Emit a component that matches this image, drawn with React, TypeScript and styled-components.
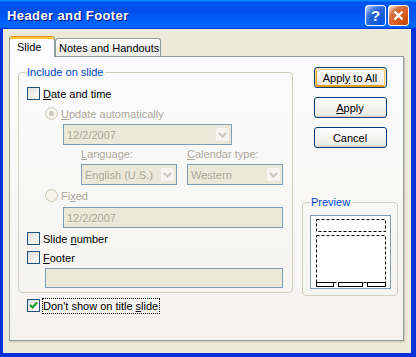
import React from 'react'
import styled, { createGlobalStyle } from 'styled-components'

const GlobalStyle = createGlobalStyle`
    html, body {
        margin: 0;
        padding: 0;
        background: #ffffff;
    }
    body {
        font-family: 'Liberation Sans', Arial, sans-serif;
        font-size: 11px;
        color: #000;
    }
`

const Window = styled.div`
    width: 416px;
    height: 357px;
    display: flex;
    flex-direction: column;
    background: #0831d9;
    box-sizing: border-box;
`

const TitleBar = styled.div`
    height: 29px;
    flex: none;
    display: flex;
    align-items: center;
    padding: 2px 7px 0 7px;
    box-sizing: border-box;
    background: linear-gradient(
        180deg,
        #0997ff,
        #0053ee 8%,
        #0050ee 40%,
        #06f 88%,
        #06f 93%,
        #005bff 95%,
        #003dd7 96%,
        #003dd7
    );
`

const Title = styled.div`
    flex: 1;
    color: #fff;
    font-family: 'Liberation Sans', Arial, sans-serif;
    font-weight: 700;
    font-size: 13px;
    letter-spacing: 0.4px;
    text-shadow: 1px 1px #0f1089;
`

const TitleButtons = styled.div`
    display: flex;
    gap: 2px;
`

const CaptionButton = styled.div<{ $kind: 'help' | 'close' }>`
    width: 21px;
    height: 21px;
    box-sizing: border-box;
    border: 1px solid #fff;
    border-radius: 3px;
    display: flex;
    align-items: center;
    justify-content: center;
    color: #fff;
    font-weight: 700;
    font-size: 15px;
    background: ${({ $kind }) =>
        $kind === 'help'
            ? 'radial-gradient(circle at 90% 90%, #0054e9 0%, #2263d5 55%, #4479e4 70%, #a3bbec 90%, #fff 100%)'
            : 'radial-gradient(circle at 90% 90%, #cc4600 0%, #dc6527 55%, #cd7546 70%, #ffccb2 90%, #fff 100%)'};
`

const Body = styled.div`
    flex: 1;
    margin: 0 5px 4px 3px;
    background: #ece9d8;
    padding: 7px 0 0 6px;
    box-sizing: border-box;
`

const TabRow = styled.div`
    display: flex;
    align-items: flex-end;
    height: 20px;
    position: relative;
    z-index: 1;
`

const Tab = styled.div<{ $active?: boolean }>`
    box-sizing: border-box;
    height: ${({ $active }) => ($active ? '21px' : '18px')};
    margin-bottom: ${({ $active }) => ($active ? '-1px' : '0')};
    padding: ${({ $active }) => ($active ? '3px 0 0 7px' : '2px 0 0 3px')};
    border: 1px solid #919b9c;
    border-bottom: none;
    border-radius: 3px 3px 0 0;
    background: ${({ $active }) =>
        $active ? '#fcfcfe' : 'linear-gradient(180deg, #fff, #fafaf9 30%, #ecebe6)'};
    border-top-color: ${({ $active }) => ($active ? '#e68b2c' : '#919b9c')};
    box-shadow: ${({ $active }) => ($active ? 'inset 0 2px #ffc73c' : 'none')};
    width: ${({ $active }) => ($active ? '46px' : '106px')};
    line-height: 14px;
    white-space: nowrap;
`

const Panel = styled.div`
    width: 395px;
    height: 285px;
    box-sizing: border-box;
    border: 1px solid #919b9c;
    box-shadow: 1px 1px 0 #d0cebf, 2px 2px 0 #e3e0d0;
    background: linear-gradient(180deg, #fcfcfe, #f4f3ee);
    padding: 9px 0 0 8px;
    display: flex;
    gap: 9px;
`

const LeftColumn = styled.div`
    width: 275px;
    display: flex;
    flex-direction: column;
`

const RightColumn = styled.div`
    width: 96px;
    display: flex;
    flex-direction: column;
    align-items: center;
`

const Group = styled.fieldset`
    margin: 0;
    min-width: 0;
    box-sizing: border-box;
    border: 1px solid #d0d0bf;
    border-radius: 4px;
    padding: 0 8px 4px 8px;
    display: flex;
    flex-direction: column;
    align-items: flex-start;
`

const Legend = styled.legend`
    color: #0046d5;
    padding: 0 2px 0 1px;
    margin-left: -1px;
    line-height: 13px;
    height: 13px;
`

const Row = styled.div<{ $top: number; $indent?: number; $disabled?: boolean }>`
    display: flex;
    align-items: center;
    gap: 3px;
    height: 13px;
    margin-top: ${({ $top }) => $top}px;
    margin-left: ${({ $indent }) => $indent ?? 0}px;
    color: ${({ $disabled }) => ($disabled ? '#aca899' : '#000')};
    white-space: nowrap;
`

const Box = styled.div`
    width: 13px;
    height: 13px;
    box-sizing: border-box;
    border: 1px solid #1c5180;
    background: linear-gradient(135deg, #dcdcd7, #fff);
    display: flex;
    align-items: center;
    justify-content: center;
    flex: none;
`

const Radio = styled.div<{ $selected?: boolean }>`
    width: 13px;
    height: 13px;
    box-sizing: border-box;
    border: 1px solid #cac8bb;
    border-radius: 50%;
    background: #f5f4ea;
    display: flex;
    align-items: center;
    justify-content: center;
    flex: none;
    &::after {
        content: '';
        display: ${({ $selected }) => ($selected ? 'block' : 'none')};
        width: 5px;
        height: 5px;
        border-radius: 50%;
        background: #cac8bb;
    }
`

const Field = styled.div<{ $width: number; $height?: number; $top: number; $indent: number }>`
    width: ${({ $width }) => $width}px;
    height: ${({ $height }) => $height ?? 21}px;
    margin-top: ${({ $top }) => $top}px;
    margin-left: ${({ $indent }) => $indent}px;
    box-sizing: border-box;
    border: 1px solid #7f9db9;
    background: #ebe8d7;
    color: #aca899;
    display: flex;
    align-items: center;
    padding-left: 3px;
    flex: none;
`

const FieldText = styled.span`
    flex: 1;
    white-space: nowrap;
`

const DropButton = styled.div`
    width: 15px;
    height: 15px;
    margin-right: 1px;
    box-sizing: border-box;
    border: 1px solid #e8e6dd;
    border-radius: 2px;
    background: #f5f4ee;
    display: flex;
    align-items: center;
    justify-content: center;
`

const LabelGrid = styled.div`
    display: grid;
    grid-template-columns: 96px 96px;
    column-gap: 10px;
    margin-left: 54px;
`

const SmallLabel = styled.div`
    color: #aca899;
    height: 13px;
    line-height: 13px;
    margin-top: 3px;
    white-space: nowrap;
`

const FocusText = styled.span`
    outline: 1px dotted #000;
    outline-offset: 0;
    padding: 1px 1px 0 0;
    line-height: 13px;
`

const Button = styled.div<{ $default?: boolean; $top: number }>`
    width: 73px;
    height: 21px;
    margin-top: ${({ $top }) => $top}px;
    box-sizing: border-box;
    border: 1px solid #003c74;
    border-radius: 3px;
    background: linear-gradient(180deg, #fff, #ecebe6 86%, #d6d0c5);
    box-shadow: ${({ $default }) =>
        $default
            ? 'inset -1px 1px #fff0cf, inset 1px 2px #fdd889, inset -2px 2px #fbc761, inset 2px -2px #e5a01a'
            : 'none'};
    display: flex;
    align-items: center;
    justify-content: center;
    flex: none;
    white-space: nowrap;
`

const PreviewGroup = styled(Group)`
    width: 96px;
    margin-top: 48px;
    padding-bottom: 6px;
`

const PreviewBox = styled.div`
    width: 81px;
    height: 74px;
    margin-top: 6px;
    margin-left: -1px;
    box-sizing: border-box;
    border: 1px solid #7f9db9;
    background: #fff;
    display: flex;
`

const Chevron = () => (
    <svg width="9" height="6" viewBox="0 0 9 6">
        <path d="M1 1 L4.5 4.5 L8 1" fill="none" stroke="#c9c7ba" strokeWidth="2" />
    </svg>
)

const Combo = ({ text, width, top, indent }: { text: string; width: number; top: number; indent: number }) => (
    <Field $width={width} $top={top} $indent={indent}>
        <FieldText>{text}</FieldText>
        <DropButton>
            <Chevron />
        </DropButton>
    </Field>
)

const Check = () => (
    <svg width="9" height="9" viewBox="0 0 9 9">
        <path d="M1 4 L3.5 6.5 L8 1.5" fill="none" stroke="#21a121" strokeWidth="2.2" />
    </svg>
)

const PreviewDrawing = () => (
    <svg width="79" height="72" viewBox="0 0 79 72">
        <g fill="none" stroke="#000" strokeWidth="1">
            <rect x="5.5" y="3.5" width="69" height="12" strokeDasharray="3 2" />
            <rect x="5.5" y="19.5" width="69" height="47" strokeDasharray="3 2" />
            <rect x="5.5" y="66.5" width="17" height="4" />
            <rect x="27.5" y="66.5" width="24" height="4" />
            <rect x="56.5" y="66.5" width="18" height="4" />
        </g>
    </svg>
)

export default function App() {
    return (
        <>
            <GlobalStyle />
            <Window>
                <TitleBar>
                    <Title>Header and Footer</Title>
                    <TitleButtons>
                        <CaptionButton $kind="help">?</CaptionButton>
                        <CaptionButton $kind="close">
                            <svg width="11" height="11" viewBox="0 0 11 11">
                                <path d="M1.5 1.5 L9.5 9.5 M9.5 1.5 L1.5 9.5" stroke="#fff" strokeWidth="2.4" />
                            </svg>
                        </CaptionButton>
                    </TitleButtons>
                </TitleBar>
                <Body>
                    <TabRow>
                        <Tab $active>Slide</Tab>
                        <Tab>Notes and Handouts</Tab>
                    </TabRow>
                    <Panel>
                        <LeftColumn>
                            <Group>
                                <Legend>Include on slide</Legend>
                                <Row $top={8}>
                                    <Box />
                                    <span>
                                        <u>D</u>ate and time
                                    </span>
                                </Row>
                                <Row $top={7} $indent={18} $disabled>
                                    <Radio $selected />
                                    <span>
                                        <u>U</u>pdate automatically
                                    </span>
                                </Row>
                                <Combo text="12/2/2007" width={169} top={4} indent={36} />
                                <LabelGrid>
                                    <SmallLabel>
                                        <u>L</u>anguage:
                                    </SmallLabel>
                                    <SmallLabel>
                                        <u>C</u>alendar type:
                                    </SmallLabel>
                                </LabelGrid>
                                <LabelGrid>
                                    <Combo text="English (U.S.)" width={96} top={3} indent={0} />
                                    <Combo text="Western" width={96} top={3} indent={0} />
                                </LabelGrid>
                                <Row $top={4} $indent={18} $disabled>
                                    <Radio />
                                    <span>
                                        Fi<u>x</u>ed
                                    </span>
                                </Row>
                                <Field $width={220} $top={5} $indent={36}>
                                    <FieldText>12/2/2007</FieldText>
                                </Field>
                                <Row $top={4}>
                                    <Box />
                                    <span>
                                        Slide <u>n</u>umber
                                    </span>
                                </Row>
                                <Row $top={6}>
                                    <Box />
                                    <span>
                                        <u>F</u>ooter
                                    </span>
                                </Row>
                                <Field $width={238} $height={20} $top={4} $indent={18} />
                            </Group>
                            <Row $top={6} $indent={9}>
                                <Box>
                                    <Check />
                                </Box>
                                <FocusText>
                                    Don't show on title <u>s</u>lide
                                </FocusText>
                            </Row>
                        </LeftColumn>
                        <RightColumn>
                            <Button $default $top={1}>
                                <span>
                                    Appl<u>y</u> to All
                                </span>
                            </Button>
                            <Button $top={9}>
                                <span>
                                    <u>A</u>pply
                                </span>
                            </Button>
                            <Button $top={9}>Cancel</Button>
                            <PreviewGroup>
                                <Legend>Preview</Legend>
                                <PreviewBox>
                                    <PreviewDrawing />
                                </PreviewBox>
                            </PreviewGroup>
                        </RightColumn>
                    </Panel>
                </Body>
            </Window>
        </>
    )
}
